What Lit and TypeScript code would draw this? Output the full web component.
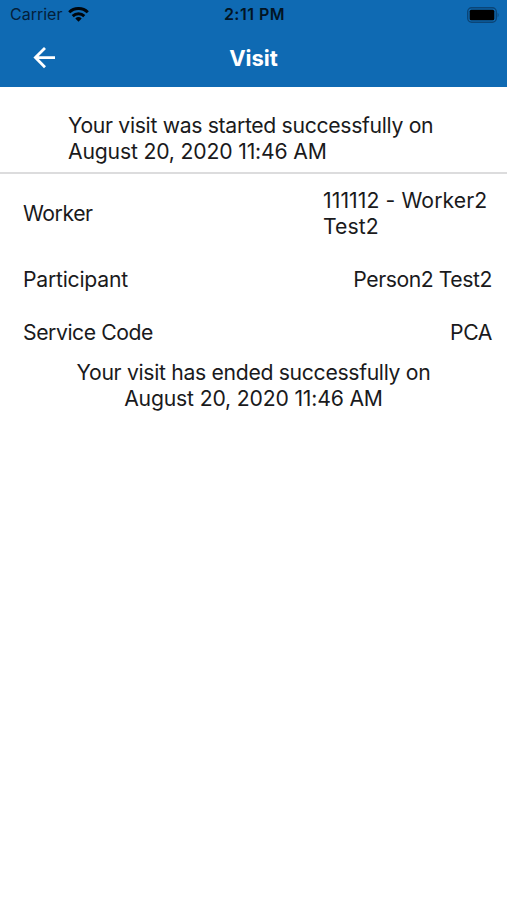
import { LitElement, html, css } from "lit";
import { customElement } from "lit/decorators.js";

@customElement("app-root")
export class AppRoot extends LitElement {
  static styles = css`
    :host { display: block; height: 900px; background: #fff; color: #1a1a1c; font: 21.2px/26.4px Inter, "Liberation Sans", sans-serif; overflow: hidden; }
    * { box-sizing: border-box; }
    .top { height: 87px; background: #0f6ab3; }
    .status { height: 29px; display: grid; grid-template-columns: 1fr auto 1fr; align-items: center; padding: 0 8px 0 10px; font-size: 16px; line-height: 29px; color: #04203a; }
    .left { display: flex; align-items: center; gap: 6px; }
    .wifi { color: #00060c; }
    .time { font-weight: 600; letter-spacing: 0.5px; color: #021424; }
    .battery { justify-self: end; }
    .nav { height: 58px; display: grid; grid-template-columns: 1fr auto 1fr; align-items: center; padding: 0 32px; color: #fff; }
    .title { font-weight: 700; font-size: 22px; }
    svg { display: block; }
    .started { height: 87px; padding: 25px 0 0 68px; border-bottom: 2px solid #dcdcdd; }
    .row { display: flex; justify-content: space-between; align-items: center; padding: 13.3px 15px 13.3px 23px; }
    .worker { padding: 13px 15px 13px 23px; }
    .wide { width: 169px; letter-spacing: 0.09px; }
    .ended { text-align: center; line-height: 26px; }
    .line { display: block; white-space: nowrap; }
    .message { letter-spacing: -0.32px; }
    .date { letter-spacing: -0.18px; }
    .snug { letter-spacing: -0.24px; }
    .tight { letter-spacing: -0.44px; }
  `;

  render() {
    return html`
      <header class="top">
        <div class="status">
          <div class="left"><span>Carrier</span>
            <svg class="wifi" width="21" height="15" viewBox="0 0 21 15" fill="none" stroke="currentColor" stroke-width="2.9"><path d="M1.2 5.2a13.4 13.4 0 0 1 18.6 0M4.7 9.1a8.4 8.4 0 0 1 11.6 0"/><path d="M7.3 11.5a4.7 4.7 0 0 1 6.4 0L10.5 14.7z" fill="currentColor" stroke="none"/></svg>
          </div>
          <span class="time">2:11 PM</span>
          <svg class="battery" width="32" height="16" viewBox="0 0 32 16"><rect x=".7" y=".7" width="28.6" height="14.6" rx="4" fill="none" stroke="#0b4577" stroke-width="1.4"/><rect x="2.7" y="2.7" width="24.6" height="10.6" rx="1.6"/><path d="M30.6 5.6q2 2.4 0 4.8z" fill="#0b4577"/></svg>
        </div>
        <div class="nav">
          <svg width="24" height="24" viewBox="0 0 24 24" fill="none" stroke="currentColor" stroke-width="2.8"><path d="M23 11.6H3.5M13 2L3.4 11.6l9.6 9.6"/></svg>
          <span class="title">Visit</span>
        </div>
      </header>
      <div class="started"><span class="line message">Your visit was started successfully on</span><span class="line date">August 20, 2020 11:46 AM</span></div>
      <div class="row worker"><span class="tight">Worker</span><span class="wide">111112 - Worker2 Test2</span></div>
      <div class="row"><span class="snug">Participant</span><span class="tight">Person2 Test2</span></div>
      <div class="row"><span class="tight">Service Code</span><span class="tight">PCA</span></div>
      <div class="ended"><span class="line message">Your visit has ended successfully on</span><span class="line date">August 20, 2020 11:46 AM</span></div>
    `;
  }
}
